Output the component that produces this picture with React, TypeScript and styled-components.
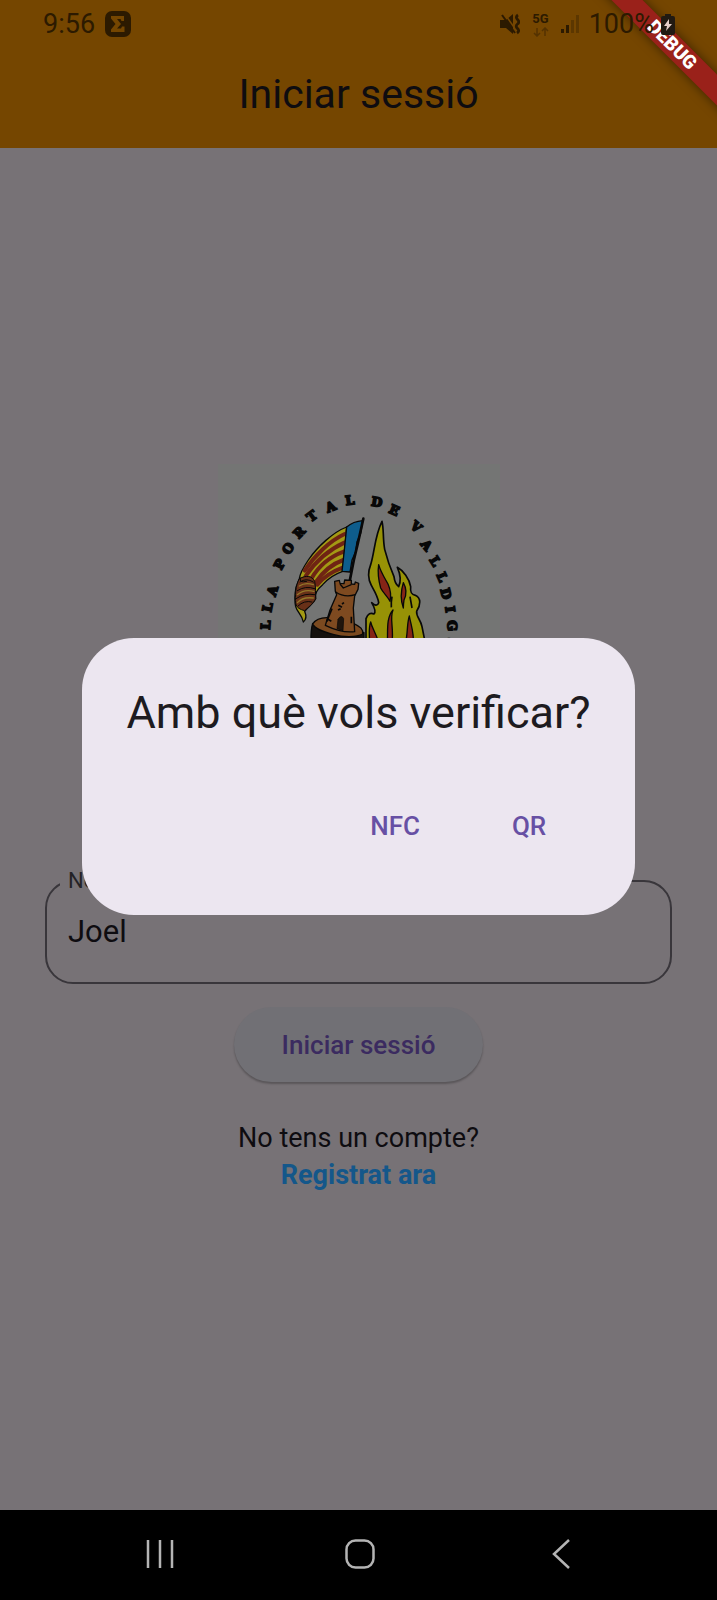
import React from 'react';
import styled, { createGlobalStyle } from 'styled-components';

const GlobalStyle = createGlobalStyle`
  *, *::before, *::after { box-sizing: border-box; }
  body { margin: 0; background: #000; }
  button, input { font-family: inherit; }
`;

const color = {
  page: '#777276',
  bar: '#754600',
  ink: '#0e0c10',
  statusInk: '#2c1a00',
  purple: '#6750a4',
};

const Screen = styled.div`
  position: relative;
  display: flex;
  flex-direction: column;
  min-height: 100vh;
  overflow: hidden;
  background: ${color.page};
  color: ${color.ink};
  font-family: Roboto, 'Liberation Sans', sans-serif;
`;

const Header = styled.header`
  background: ${color.bar};
`;

const StatusBar = styled.div`
  position: relative;
  z-index: 3;
  display: flex;
  align-items: center;
  justify-content: space-between;
  height: 48px;
  padding: 0 42px 0 43px;
  color: ${color.statusInk};
  font-size: 27px;
  line-height: 32px;
`;

const StatusGroup = styled.div<{ $gap: number }>`
  display: flex;
  align-items: center;
  gap: ${({ $gap }) => $gap}px;
`;

const AppTitle = styled.h1`
  margin: 0;
  padding: 22px 16px 30px;
  font-size: 41px;
  font-weight: 400;
  line-height: 48px;
  text-align: center;
`;

const Main = styled.main`
  flex: 1;
  display: flex;
  flex-direction: column;
  align-items: center;
  justify-content: center;
  padding: 0 45px;
`;

const Emblem = styled.svg`
  display: block;
  width: 282px;
  height: 374px;
  margin-bottom: 30px;
  background: #747574;
`;

const Field = styled.fieldset`
  width: 100%;
  height: 116px;
  margin: 0 0 23px;
  padding: 0 21px;
  border: 2px solid #39363b;
  border-radius: 28px;
`;

const Legend = styled.legend`
  margin-left: -8px;
  padding: 0 8px;
  color: #242226;
  font-size: 22px;
  line-height: 26px;
`;

const TextInput = styled.input`
  display: block;
  width: 100%;
  height: 74px;
  padding: 0;
  border: 0;
  outline: 0;
  background: transparent;
  color: inherit;
  font-size: 31px;
`;

const SubmitButton = styled.button`
  height: 75px;
  margin-bottom: 38px;
  padding: 0 48px;
  border: 0;
  border-radius: 38px;
  background: #717075;
  box-shadow: 0 2px 2px rgba(0, 0, 0, 0.25);
  color: #3b2b60;
  font-size: 26px;
  font-weight: 500;
`;

const SignUp = styled.p`
  display: flex;
  flex-direction: column;
  align-items: center;
  margin: 0;
  font-size: 27px;
  line-height: 37px;
`;

const SignUpLink = styled.a`
  color: #14578a;
  font-weight: 700;
  text-decoration: none;
`;

const DialogLayer = styled.div`
  position: absolute;
  inset: 0;
  z-index: 1;
  display: flex;
  align-items: center;
  justify-content: center;
  padding: 42px 74px 90px;
`;

const Dialog = styled.div`
  padding: 45px 44px;
  border-radius: 52px;
  background: #ece6f0;
  color: #1d1b20;
`;

const DialogTitle = styled.h2`
  margin: 0 0 46px;
  font-size: 45px;
  font-weight: 400;
  line-height: 60px;
`;

const DialogActions = styled.div`
  display: flex;
  justify-content: flex-end;
  gap: 15px;
  padding: 0 2px 7px 0;
`;

const TextButton = styled.button`
  min-width: 119px;
  height: 74px;
  padding: 0 22px;
  border: 0;
  border-radius: 37px;
  background: transparent;
  color: ${color.purple};
  font-size: 26px;
  font-weight: 500;
`;

const RibbonCorner = styled.div`
  position: absolute;
  top: 0;
  right: 0;
  z-index: 2;
  width: 140px;
  height: 140px;
  overflow: hidden;
  pointer-events: none;
`;

const Ribbon = styled.div`
  position: absolute;
  top: 34px;
  left: 0;
  width: 190px;
  height: 22px;
  transform: rotate(45deg);
  background: #9a211a;
  box-shadow: 0 0 11px rgba(0, 0, 0, 0.5);
  color: #fff;
  font-size: 19px;
  font-weight: 900;
  line-height: 22px;
  text-align: center;
`;

const NavBar = styled.nav`
  position: relative;
  z-index: 2;
  display: flex;
  height: 90px;
  padding: 0 56px 2px 60px;
  background: #000;
`;

const NavButton = styled.button`
  flex: 1;
  display: flex;
  align-items: center;
  justify-content: center;
  padding: 0;
  border: 0;
  background: transparent;
  color: #b4b4b4;
`;

type Letter = [char: string, x: number, y: number, angle: number];

const motto: Letter[] = [
  ['A', 168, 582, -90],
  ['L', 166, 525, -86],
  ['L', 172, 472, -79],
  ['A', 187, 422, -72],
  ['P', 208, 342, -62],
  ['O', 234, 295, -54],
  ['R', 267, 247, -46],
  ['T', 305, 198, -37],
  ['A', 362, 170, -22],
  ['L', 419, 150, -8],
  ['D', 501, 155, 9],
  ['E', 553, 180, 24],
  ['V', 619, 230, 40],
  ['A', 650, 285, 50],
  ['L', 676, 333, 58],
  ['L', 697, 381, 66],
  ['D', 708, 431, 76],
  ['I', 721, 478, 82],
  ['G', 727, 527, 88],
  ['N', 729, 582, 92],
];

const LogoEmblem = () => (
  <Emblem viewBox="24 42 846 1122" role="img" aria-label="Falla Portal de Valldigna">
    <g fill="#080808" stroke="#080808" strokeWidth="5" fontFamily="'DejaVu Serif', serif" fontWeight="700" fontSize="38" textAnchor="middle">
      {motto.map(([char, x, y, angle]) => (
        <text key={`${x}-${y}`} transform={`translate(${x} ${y}) rotate(${angle})`} y="14">
          {char}
        </text>
      ))}
    </g>

    <g stroke="#080808" strokeWidth="4" strokeLinejoin="round" strokeLinecap="round">
      <path fill="#a39a14" d="M410 231C370 246 322 290 295 330C280 352 270 370 268 386L258 412C254 434 254 456 257 470C262 488 276 494 280 516C290 508 289 496 284 484C296 468 310 462 317 446C312 428 326 414 338 404C355 384 375 372 398 364Z" />
      <g fill="none" stroke="#6f2413" strokeWidth="12">
        <path d="M404 252C360 272 315 315 284 362" />
        <path d="M403 278C355 300 318 332 287 378" />
        <path d="M401 305C360 320 325 350 304 386" />
        <path d="M400 330C365 342 338 366 316 398" />
        <path d="M398 353C368 364 342 380 322 404" />
      </g>
      <path fill="#683018" strokeWidth="3" d="M268 386C290 374 306 378 314 394C318 412 316 432 317 446C308 464 294 472 284 482C270 478 260 474 257 460C255 440 256 406 268 386Z" />
      <g fill="none" stroke="#94782a" strokeWidth="4">
        <path d="M268 408C282 398 298 400 310 404" />
        <path d="M262 434C278 420 296 420 312 424" />
        <path d="M262 458C276 442 294 442 310 444" />
      </g>
      <g fill="none" strokeWidth="3">
        <path d="M272 384Q264 400 290 394M270 396Q288 382 310 396M262 422Q286 406 314 416M258 446Q284 428 314 434M264 468Q282 450 306 456" />
      </g>
      <path fill="#0e5d8c" d="M410 231Q430 214 458 212L452 250L441 275L437 305L426 330L420 366L396 364L403 300Z" />
      <path fill="none" strokeWidth="8" d="M460 206L444 278L432 328L419 394" />
    </g>

    <g stroke="#080808" strokeWidth="4" strokeLinejoin="round">
      <path fill="#15110e" d="M308 520Q302 540 303 575L462 600L462 548Z" />
      <path fill="#7b4a20" d="M308 522C318 506 336 502 356 503L430 520C452 530 460 538 458 552C440 562 400 562 372 554C342 546 316 538 308 522Z" />
      <path fill="#7e4a20" d="M376 424L374 394L388 391L390 400L402 401L404 390L424 391L424 402L434 403L436 396L446 400L444 418L434 438L430 474L434 545Q396 550 346 526L360 480L380 434Z" />
      <path fill="none" d="M377 426Q404 444 436 434M390 402L400 414L424 404" />
      <path fill="#20150c" strokeWidth="2" d="M381 536L384 508Q394 492 401 506L399 542Z" />
      <path fill="none" strokeWidth="5" d="M385 466L396 472M384 480L392 476M364 514L354 508M424 500L424 520M396 462L402 458" />
      <path fill="none" strokeWidth="5" d="M366 476L350 515" />
    </g>

    <g stroke="#080808" strokeWidth="5" strokeLinejoin="round">
      <path fill="#979206" d="M516 214C522 240 518 264 524 298C530 322 540 352 552 380C554 398 558 404 566 410C574 392 570 370 562 352C580 362 598 386 602 410C600 428 604 434 616 436C634 444 632 466 620 484C618 500 632 508 636 530L646 580L468 620L468 506C474 490 482 488 492 492C500 484 492 470 485 458C494 466 502 470 506 458C504 440 494 424 484 406C474 388 474 364 482 344C494 306 494 258 516 214Z" />
      <g fill="#862416" strokeWidth="4">
        <path d="M506 344C512 366 524 384 534 402C542 420 544 436 540 454C534 440 520 430 512 414C506 392 502 370 506 344Z" />
        <path d="M580 398C590 416 590 434 582 450C580 464 580 470 580 474C572 452 572 424 580 398Z" />
        <path d="M549 480C538 506 552 530 546 580L532 580C534 540 528 504 549 480Z" />
        <path d="M598 498C604 530 612 548 610 580L586 580C594 552 590 522 598 498Z" />
        <path d="M482 516C486 536 500 550 506 580L478 580C480 554 474 538 482 516Z" />
      </g>
      <path fill="none" d="M546 440Q543 456 544 472M600 440L606 474" />
    </g>
  </Emblem>
);

const AppBadgeIcon = () => (
  <svg width="26" height="26" viewBox="0 0 26 26" aria-hidden="true">
    <rect width="26" height="26" rx="7" fill={color.statusInk} />
    <path d="M6 5H19V10H16.500L15.500 8H12L16 13L12 17.500H16L17 15.500H19.500V21H6V18.500L10.500 13L6 7.500Z" fill={color.bar} />
  </svg>
);

const MuteIcon = () => (
  <svg width="20" height="22" viewBox="0 0 20 22" aria-hidden="true">
    <path d="M0 7H6L13 1V21L6 15H0Z" fill={color.statusInk} />
    <path d="M4 0L16 17" stroke={color.bar} strokeWidth="1.500" />
    <path d="M2 2L15 20" stroke={color.statusInk} strokeWidth="2" />
    <path d="M18 2Q15 4 17.500 6.500T17.500 11T17.500 15.500T17 20" fill="none" stroke={color.statusInk} strokeWidth="2.800" />
  </svg>
);

const NetworkBadge = styled.span`
  display: flex;
  flex-direction: column;
  align-items: center;
  font-size: 13px;
  font-weight: 700;
  line-height: 16px;
`;

const NetworkIcon = () => (
  <NetworkBadge>
    5G
    <svg width="16" height="10" viewBox="0 0 16 10" aria-hidden="true">
      <path d="M4 1V9M1 6L4 9L7 6M12 9V1M9 4L12 1L15 4" fill="none" stroke="#543200" strokeWidth="1.500" />
    </svg>
  </NetworkBadge>
);

const SignalIcon = () => (
  <svg width="19" height="20" viewBox="0 0 19 20" aria-hidden="true">
    <path d="M0 15H3V19H0ZM5 11H8V19H5Z" fill={color.statusInk} />
    <path d="M10 6H13V19H10ZM15 1H18V19H15Z" fill="#5c3700" />
  </svg>
);

const BatteryIcon = () => (
  <svg width="14" height="21" viewBox="0 0 14 21" aria-hidden="true">
    <path d="M4 0H10V2H12Q14 2 14 4V19Q14 21 12 21H2Q0 21 0 19V4Q0 2 2 2H4Z" fill="#211a12" />
    <path d="M8 5L3 12H6L5 17L11 10H8Z" fill="#e6cfc8" />
  </svg>
);

export default function App() {
  return (
    <Screen>
      <GlobalStyle />
      <Header>
        <StatusBar>
          <StatusGroup $gap={10}>
            <span>9:56</span>
            <AppBadgeIcon />
          </StatusGroup>
          <StatusGroup $gap={9}>
            <StatusGroup $gap={12}>
              <MuteIcon />
              <NetworkIcon />
              <SignalIcon />
            </StatusGroup>
            <StatusGroup $gap={7}>
              <span>100%</span>
              <BatteryIcon />
            </StatusGroup>
          </StatusGroup>
        </StatusBar>
        <AppTitle>Iniciar sessió</AppTitle>
      </Header>

      <Main>
        <LogoEmblem />
        <Field>
          <Legend>
            <label htmlFor="name">Nom</label>
          </Legend>
          <TextInput id="name" type="text" defaultValue="Joel" />
        </Field>
        <SubmitButton type="button">Iniciar sessió</SubmitButton>
        <SignUp>
          <span>No tens un compte?</span>
          <SignUpLink href="#registre">Registrat ara</SignUpLink>
        </SignUp>
      </Main>

      <DialogLayer>
        <Dialog role="dialog" aria-modal="true" aria-labelledby="verify-title">
          <DialogTitle id="verify-title">Amb què vols verificar?</DialogTitle>
          <DialogActions>
            <TextButton type="button">NFC</TextButton>
            <TextButton type="button">QR</TextButton>
          </DialogActions>
        </Dialog>
      </DialogLayer>

      <RibbonCorner>
        <Ribbon>DEBUG</Ribbon>
      </RibbonCorner>

      <NavBar>
        <NavButton type="button" aria-label="Recents">
          <svg width="28" height="30" viewBox="0 0 28 30" fill="none" stroke="currentColor" strokeWidth="2.500">
            <path d="M2 1V29M14 1V29M26 1V29" />
          </svg>
        </NavButton>
        <NavButton type="button" aria-label="Inici">
          <svg width="30" height="30" viewBox="0 0 30 30" fill="none" stroke="currentColor" strokeWidth="2.500">
            <rect x="1.500" y="1.500" width="27" height="27" rx="9" />
          </svg>
        </NavButton>
        <NavButton type="button" aria-label="Enrere">
          <svg width="18" height="30" viewBox="0 0 18 30" fill="none" stroke="currentColor" strokeWidth="2.500">
            <path d="M17 1L2 15L17 29" />
          </svg>
        </NavButton>
      </NavBar>
    </Screen>
  );
}
